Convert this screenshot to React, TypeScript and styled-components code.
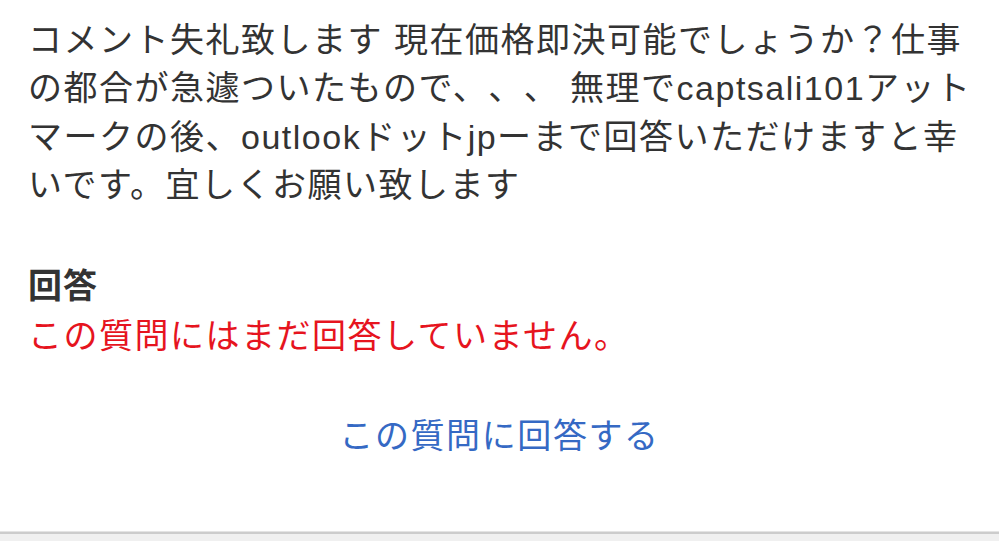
import React from "react";
import styled, { createGlobalStyle } from "styled-components";

const GlobalStyle = createGlobalStyle`
  html, body {
    margin: 0;
    padding: 0;
    background: #ffffff;
  }
  body {
    font-family: "Liberation Sans", "Noto Sans CJK JP", sans-serif;
    -webkit-font-smoothing: antialiased;
    text-spacing-trim: space-all;
  }
`;

const Page = styled.div`
  width: 999px;
  height: 541px;
  display: flex;
  flex-direction: column;
  overflow: hidden;
`;

const Card = styled.main`
  height: 532px;
  box-sizing: border-box;
  padding: 16px 18px 0 28px;
  display: flex;
  flex-direction: column;
`;

const Body = styled.p`
  margin: 0;
  font-size: 34px;
  line-height: 48.3px;
  letter-spacing: 1.5px;
  color: #333333;
  word-break: break-all;
  text-spacing-trim: space-all;
`;

const Section = styled.section`
  margin-top: 53px;
  display: flex;
  flex-direction: column;
`;

const Heading = styled.h3`
  margin: 0;
  font-size: 34px;
  line-height: 48px;
  font-weight: 700;
  color: #333333;
  letter-spacing: 1px;
`;

const Status = styled.p`
  margin: 2px 0 0;
  font-size: 34px;
  line-height: 49px;
  letter-spacing: 1.5px;
  color: #e6141e;
`;

const LinkRow = styled.div`
  margin-top: 51px;
  margin-right: -18px;
  margin-left: -28px;
  display: flex;
  justify-content: center;
`;

const AnswerLink = styled.a`
  font-size: 34px;
  line-height: 48px;
  letter-spacing: 1.6px;
  color: #3569c4;
  text-decoration: none;
  cursor: pointer;
`;

const Footer = styled.footer`
  flex: 1;
  background: #f0f0f0;
  border-top: 2px solid #cccccc;
  box-shadow: 0 -1px 0 #e4e4e4;
`;

export default function App() {
  return (
    <>
      <GlobalStyle />
      <Page>
        <Card>
          <Body>
            コメント失礼致します 現在価格即決可能でしょうか？仕事の都合が急遽ついたもので、、、 無理でcaptsali101アットマークの後、outlookドットjpーまで回答いただけますと幸いです。宜しくお願い致します
          </Body>
          <Section>
            <Heading>回答</Heading>
            <Status>この質問にはまだ回答していません。</Status>
          </Section>
          <LinkRow>
            <AnswerLink>この質問に回答する</AnswerLink>
          </LinkRow>
        </Card>
        <Footer />
      </Page>
    </>
  );
}
